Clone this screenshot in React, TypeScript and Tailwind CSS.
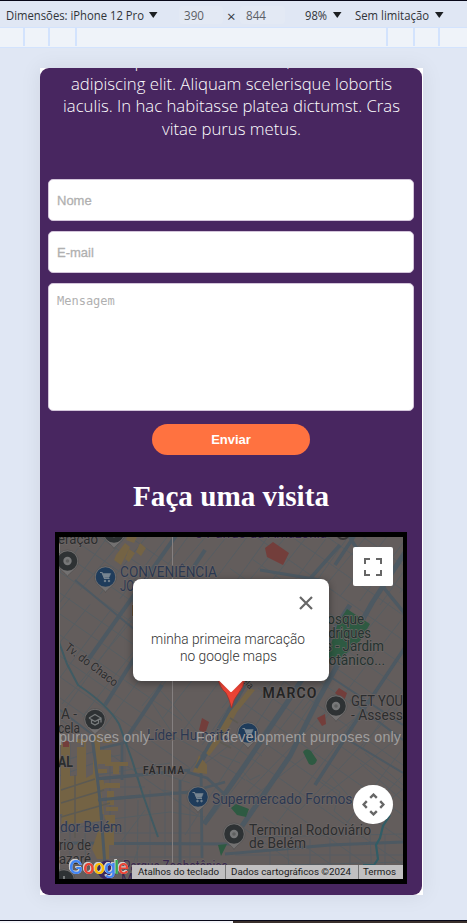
import React from "react";

const INTRO = [
  { text: "Lorem ipsum dolor sit amet, consectetur", width: 308 },
  { text: "adipiscing elit. Aliquam scelerisque lobortis", width: 321 },
  { text: "iaculis. In hac habitasse platea dictumst. Cras", width: 337 },
  { text: "vitae purus metus.", width: 139 },
];

/* One line of text fitted to a fixed advance width. */
function Fit({
  text,
  width,
  height,
  size,
  base,
  className = "",
  weight = 400,
}: {
  text: string;
  width: number;
  height: number;
  size: number;
  base: number;
  className?: string;
  weight?: number;
}) {
  return (
    <svg width={width} height={height} className={`block shrink-0 overflow-visible ${className}`}>
      <text x="0" y={base} fontSize={size} fontWeight={weight} textLength={width} lengthAdjust="spacingAndGlyphs" fill="currentColor">
        {text}
      </text>
    </svg>
  );
}

function Caret() {
  return (
    <svg width="9" height="6" viewBox="0 0 9 6" className="shrink-0">
      <path d="M0 0h8.500L4.250 6z" fill="#1c1f22" />
    </svg>
  );
}

function Toolbar() {
  return (
    <div className="flex h-[27px] items-center border-b border-[#d3e3fd] bg-[#e0e7f4] pt-px pl-[6px] font-['Open_Sans',sans-serif] text-[#303338]">
      <Fit text="Dimensões: iPhone 12 Pro" width={138} height={16} size={12} base={12.8} />
      <span className="w-[5px]" />
      <Caret />
      <div className="ml-[21px] flex h-[18px] w-[44px] items-center rounded-sm bg-[#e3e9f4] pl-[5px] text-[#5c6066]">
        <Fit text="390" width={20} height={16} size={12} base={12.8} />
      </div>
      <span className="ml-[4px] w-[10px] pt-[4px] text-[15px] leading-none text-[#34383e]">×</span>
      <div className="ml-[3px] flex h-[18px] w-[45px] items-center rounded-sm bg-[#e3e9f4] pl-[6px] text-[#5c6066]">
        <Fit text="844" width={20} height={16} size={12} base={12.8} />
      </div>
      <span className="w-[20px]" />
      <Fit text="98%" width={22} height={16} size={12} base={12.8} />
      <span className="w-[6px]" />
      <Caret />
      <span className="w-[13px]" />
      <Fit text="Sem limitação" width={74} height={16} size={12} base={12.8} />
      <span className="w-[6px]" />
      <Caret />
    </div>
  );
}

function MediaBar() {
  return (
    <div className="flex h-[20px] justify-between border-b border-[#d3e3fd] bg-[#eff3f9] pb-px">
      <div className="flex">
        <div className="w-[25px] border-r-2 border-[#d3e3fd]" />
        <div className="w-[25px] border-r-2 border-[#d3e3fd]" />
        <div className="w-[27px] border-r-2 border-[#d3e3fd]" />
      </div>
      <div className="flex">
        <div className="w-[27px] border-l-2 border-[#d3e3fd]" />
        <div className="w-[25px] border-l-2 border-[#d3e3fd]" />
        <div className="w-[29px] border-l-2 border-[#d3e3fd]" />
      </div>
    </div>
  );
}

function Label({
  x,
  y,
  w,
  size = 14,
  fill = "#2b2d2e",
  weight = 400,
  children,
}: {
  x: number;
  y: number;
  w: number;
  size?: number;
  fill?: string;
  weight?: number;
  children: string;
}) {
  return (
    <text x={x} y={y} fontSize={size} fontWeight={weight} fill={fill} stroke="#6b6565" strokeWidth="1.4" paintOrder="stroke" textLength={w} lengthAdjust="spacingAndGlyphs">
      {children}
    </text>
  );
}

function Pin({ x, y, kind }: { x: number; y: number; kind: "dot" | "cart" | "school" | "plus" }) {
  const color = kind === "cart" ? "#1f3c5b" : "#2e3234";
  return (
    <g transform={`translate(${x} ${y})`}>
      <path d="M0 15.500C-2 11-11 8-11 0a11 11 0 1 1 22 0C11 8 2 11 0 15.500z" fill="#737171" stroke="#4f4d4d" strokeWidth=".6" />
      <circle r="9.800" fill={color} />
      {kind === "dot" && <circle r="4.200" fill="#777879" />}
      {kind === "dot" && <circle r="1.800" fill="#5f6060" />}
      {kind === "cart" && (
        <g stroke="#778591" fill="none">
          <path d="M-5.500-4.500h2l2.500 6h5" strokeWidth="1.200" />
          <path d="M-2.800-3.500h8L3.500.5h-5z" fill="#778591" strokeWidth=".5" />
          <circle cx="-.5" cy="4" r=".8" fill="#778591" />
          <circle cx="3.500" cy="4" r=".8" fill="#778591" />
        </g>
      )}
      {kind === "school" && (
        <path d="M-6-1.500 0-5l6 3.500V3M6-1.500 0 2l-6-3.500M-3.500.5v3L0 5.500l3.500-2v-3" fill="none" stroke="#777b7c" strokeWidth="1.300" />
      )}
      {kind === "plus" && <path d="M0-4v8M-4 0h8" stroke="#777b7c" strokeWidth="2" />}
    </g>
  );
}

const range = (n: number) => Array.from({ length: n }, (_, i) => i);

function MapCanvas() {
  return (
    <svg width="344" height="342" viewBox="59 537 344 342" className="block font-[Roboto,sans-serif]">
      <rect x="59" y="537" width="344" height="342" fill="#635d5c" />

      <g stroke="#565d62" strokeWidth="1" fill="none">
        {range(24).map((i) => {
          const x = 20 + i * 20;
          const gap = (i * 37) % 50;
          return <path key={i} d={`M${x - 118} ${750 - gap}L${x - 30} ${622 - gap / 2}M${x - 20} ${606 - gap / 3}L${x + 40} 520`} />;
        })}
        {range(13).map((i) => {
          const y = 520 + i * 21;
          return <path key={i} d={`M50 ${y - 60}L${150 + ((i * 29) % 50)} ${y + 10 + ((i * 29) % 50) * 0.7}`} />;
        })}
        {range(16).map((i) => {
          const y = 440 + i * 25;
          return <path key={i} d={`M${225 + ((i * 17) % 40)} ${y + ((i * 17) % 40) * 0.7}L410 ${y + 130}`} />;
        })}
        {range(13).map((i) => {
          const x = 215 + i * 23;
          return <path key={i} d={`M${x - 30} ${835 - ((i * 13) % 40)}L${x + 70} ${680 + ((i * 13) % 40)}`} />;
        })}
        <path d="M59 762 96 751M59 776 97 762M59 789 98 775M59 803 99 789M59 816 100 800M59 833 103 821M70 740V870M83 735 86 879M110 750V835M125 745V879M138 800 137 879M150 790V878M165 780V879M190 790V879" />
        <path d="M95 760 120 755M98 775 170 763M100 787H145M104 820 170 812 205 817M105 833H200M110 857H200M150 770 190 783M162 790 205 797M140 843 128 879M145 810 120 843" />
        <path d="M150 700 175 737 209 756 245 780M160 690 200 735M203 765 239 738M182 780 205 750M220 755 240 763" />
        <path d="M235 855H403M255 837 403 834M250 866 403 862M270 846V879M287 843 290 879M310 839V879M330 838V879M350 837V879M370 835 372 879M385 835V875" />
        <path d="M322 780 340 792 334 811 351 825M330 775 363 812M360 763 403 801M365 753 403 785" />
        <path d="M254 750 262 756M240 768 250 780 260 775" />
      </g>

      <g stroke="#4d5962" fill="none" strokeLinejoin="round">
        <path d="M88 660 180 530M105 705 155 625 205 550M124 742 162 685" strokeWidth="4" />
        <path d="M196 770 247 680 285 625M204 824 245 765 290 698 350 605M242 826 290 756 318 700 372 603 410 545" strokeWidth="5" />
        <path d="M315 785 360 715 410 640M345 530 375 577 410 620M335 565 357 532M300 590 340 545" strokeWidth="3.500" />
        <path d="M92 735 100 800 106 879M93 750 128 742M96 779 190 770M98 800 190 792 225 782M59 843 235 844M180 780V879M201 765 202 858" strokeWidth="2.800" />
        <path d="M187 772 207 778 235 804M59 793 95 780M122 742V780M225 854 330 845 403 842M260 570 320 580" strokeWidth="2.800" />
        <path d="M350 700 403 740M340 735 403 773M290 650 403 725M75 580 135 630M60 710 93 735" strokeWidth="2" />
      </g>
      <path d="M59 642 67 664 78 685Q108 705 119 724L132 760 143 795 158 837" fill="none" stroke="#405b63" strokeWidth="2" />
      <path d="M390 815 383 826 380 838 376 845 378 859 374 865H363" fill="none" stroke="#315d66" strokeWidth="2.200" />

      <g fill="#746344">
        <path d="M127 537h10l-3 6-8-3zM140 543l6 5-5 8-5-4zM116 555l9-12 5 4-9 18-7-5zM129 549l6 4-6 9-4-3z" />
        <path d="M61 744h9v32h7v-29h7v-4h-7v-4h9v39l7-4v-39h7v15h11v14H98v5h9v4h-9v6h5l3 9-5 2 3 24H60v-26l1-4z" />
        <path d="M63 808h36l2 13-40 4zM98 831h16v14h-5v14H97l-5-10zM107 791h7v14h-7zM104 815h11v13h-7z" />
        <path d="M103 740h9v3h-9zM105 762h23v4h-9v8h-6v-8h-8zM105 783h15v5h-15zM106 807h12v4h-12zM101 843h9v2h-9z" />
        <path d="M193 772l6-17 8 10v9zM204 751l3-2 20-34 13-15 9-12 6 2-18 22-14 26-14 18z" />
      </g>
      <g stroke="#5c5a53" strokeWidth="1.500">
        <path d="M61 790 95 779M61 803 104 790M61 817 110 803M75 775V838M220 742l11 6M230 718l8 5" />
      </g>
      <path d="M92 735 100 800 106 879M196 768 238 695M96 779 140 775M98 800 140 796" stroke="#4d5962" strokeWidth="3" fill="none" />
      <g fill="#733e3b">
        <path d="M265 548l8-6 16 11-6 12-16-8zM202 718l7 4-4 12-6-4zM335 693l4-5 8 5-3 8zM317 718l8-4 1 10-4 2zM63 741h6v6h-6z" />
      </g>
      <g fill="#2e5a42">
        <path d="M338 623l9-14 23 15-10 17-18 16-17 5zM303 752q3-5 8-1l6 9q-2 7-8 4zM231 808l5-4 13 5-3 8-9-2zM218 845l9-1-6 12z" />
      </g>
      <path d="M172.500 537V879M59.500 537V879" stroke="#858080" strokeWidth="1" />

      <Pin x={114} y={533} kind="dot" />
      <Pin x={67.5} y={561} kind="dot" />
      <Pin x={105.5} y={577} kind="cart" />
      <Pin x={95} y={719.5} kind="school" />
      <Pin x={336} y={706} kind="dot" />
      <Pin x={248} y={733} kind="cart" />
      <Pin x={198} y={797} kind="cart" />
      <Pin x={234} y={834} kind="dot" />
      <Pin x={64} y={880} kind="plus" />
      <circle cx="107" cy="870" r="9.500" fill="#3b2860" />
      <circle cx="343" cy="533" r="6" fill="none" stroke="#393738" strokeWidth="2" />

      <Label x={58} y={544} w={40}>eração</Label>
      <Label x={120} y={577} w={97} fill="#2b3851">CONVENIÊNCIA</Label>
      <Label x={120} y={591} w={65} fill="#2b3851">JOSÉ MARIA</Label>
      <Label x={195} y={537.5} w={35} fill="#38284f">o Pan</Label>
      <Label x={231} y={537.5} w={96} fill="#38284f">do da Amazônia</Label>
      <Label x={131.5} y={616} w={22} weight={700} fill="#191919">PE</Label>
      <g transform="rotate(37 64 649)">
        <Label x={64} y={649} w={63} size={12}>Tv. do Chaco</Label>
      </g>
      <Label x={319} y={623.5} w={45} fill="#24332f">Bosque</Label>
      <Label x={313} y={637.5} w={58} fill="#24332f">Rodrigues</Label>
      <Label x={300} y={651} w={84} fill="#24332f">Alves - Jardim</Label>
      <Label x={320} y={665} w={65} fill="#24332f">Botânico...</Label>
      <g transform="rotate(45 242 682)">
        <Label x={241} y={682} w={12} size={10}>ela</Label>
      </g>
      <text x="262.500" y="697.500" fontSize="14" fontWeight="600" fill="#242424" stroke="#6b6565" strokeWidth="1.400" paintOrder="stroke" textLength="54">MARCO</text>
      <Label x={351} y={706} w={60}>GET YOUR</Label>
      <Label x={351} y={719.5} w={52}>- Assess</Label>
      <Label x={61} y={719} w={16}>A -</Label>
      <Label x={58} y={733} w={22}>cela</Label>
      <Label x={147} y={739.5} w={84} fill="#2b3851">Líder Humaitá</Label>
      <Label x={58} y={767} w={15} weight={700}>AL</Label>
      <text x="143" y="773.500" fontSize="10.200" fontWeight="600" fill="#282828" stroke="#6b6565" strokeWidth="1.300" paintOrder="stroke" textLength="41">FÁTIMA</text>
      <Label x={212} y={804} w={148} fill="#2b3851">Supermercado Formosa</Label>
      <Label x={249} y={834.5} w={122}>Terminal Rodoviário</Label>
      <Label x={249} y={848} w={57}>de Belém</Label>
      <Label x={60} y={832} w={62} fill="#2b3851">dor Belém</Label>
      <Label x={59} y={850} w={32}>rio de</Label>
      <Label x={59} y={863.5} w={32}>azaré</Label>
      <Label x={123} y={871} w={105} fill="#38284f">Parque Zoobotânico</Label>
      <Label x={121} y={884} w={45} fill="#38284f">Mangal</Label>

      <g fill="#a09d9d" fontFamily="'Liberation Sans', Arial, sans-serif" fontSize="14.300">
        <text x="59" y="742" textLength="91">purposes only</text>
        <text x="196" y="742" textLength="205">For development purposes only</text>
      </g>

      <path d="M218 678q1 9 8 15 3 5 5.500 15 2.500-10 6.500-14 6-7 7-16z" fill="#ea4335" stroke="#9c322a" strokeWidth=".8" />
    </svg>
  );
}

const LOGO = [
  { c: "G", x: 0, fill: "#4285f4" },
  { c: "o", x: 14.3, fill: "#ea4335" },
  { c: "o", x: 24.8, fill: "#fbbc05" },
  { c: "g", x: 35.2, fill: "#4285f4" },
  { c: "l", x: 45.3, fill: "#34a853" },
  { c: "e", x: 49, fill: "#ea4335" },
];

function GoogleLogo() {
  return (
    <svg
      width="62"
      height="24"
      viewBox="0 0 62 24"
      className="absolute bottom-[-3px] left-[9.500px] overflow-visible font-[Inter,sans-serif] text-[18.500px] font-semibold [filter:drop-shadow(0.7px_0.7px_0_#d0d0d0)_drop-shadow(-0.7px_-0.7px_0_#d0d0d0)]"
    >
      {LOGO.map((l) => (
        <text key={l.x} x={l.x} y="16" fill={l.fill}>
          {l.c}
        </text>
      ))}
    </svg>
  );
}

function GoogleMap() {
  return (
    <div className="relative mx-auto h-[352px] w-[352px] shrink-0 overflow-hidden border-[4px] border-t-[5px] border-b-[5px] border-black font-[Roboto,sans-serif]">
      <MapCanvas />

      <div className="absolute top-[42px] left-[74px] flex h-[102px] w-[196px] flex-col items-center rounded-[8px] bg-white pt-[53px] pr-[6px] text-[#333] shadow-[0_2px_7px_1px_rgba(0,0,0,0.3)]">
        <svg width="14" height="14" viewBox="0 0 14 14" className="absolute top-[17px] right-[16px]">
          <path d="M1 1l12 12M13 1L1 13" stroke="#666" strokeWidth="2.200" />
        </svg>
        <Fit text="minha primeira marcação" width={154} height={17} size={14} base={11.5} weight={300} />
        <Fit text="no google maps" width={97} height={17} size={14} base={11.5} weight={300} />
      </div>
      <div className="absolute top-[143px] left-[160px] h-[12px] w-[24px] bg-white [clip-path:polygon(0_0,100%_0,50%_100%)]" />

      <button className="absolute top-[10px] left-[294px] flex h-[39px] w-[40px] items-center justify-center rounded-[2px] bg-white">
        <svg width="18" height="18" viewBox="0 0 18 18" fill="none" stroke="#666" strokeWidth="2">
          <path d="M1 6V1h5M12 1h5v5M17 12v5h-5M6 17H1v-5" />
        </svg>
      </button>
      <button className="absolute top-[248px] left-[294px] flex h-[39px] w-[40px] items-center justify-center rounded-full bg-white">
        <svg width="23" height="23" viewBox="0 0 23 23" fill="none" stroke="#666" strokeWidth="2.400">
          <path d="M8.200 4.800l3.300-3.200 3.300 3.200M8.200 18.200l3.300 3.200 3.300-3.200M4.800 8.200L1.600 11.500l3.200 3.300M18.200 8.200l3.200 3.300-3.200 3.300" />
        </svg>
      </button>

      <GoogleLogo />
      <div className="absolute right-0 bottom-0 flex h-[14px] items-center text-[#1a1a1a]">
        <div className="flex h-full w-[93px] items-center justify-center bg-[#c1c0c1]">
          <Fit text="Atalhos do teclado" width={81} height={12} size={9.6} base={9} />
        </div>
        <div className="flex h-full w-[133px] items-center justify-center border-l border-[#777] bg-[#c1c0c1] pr-[2px]">
          <Fit text="Dados cartográficos ©2024" width={120} height={12} size={9.6} base={9} />
        </div>
        <div className="flex h-full w-[45px] items-center justify-center border-l border-[#777] bg-[#c1c0c1] pr-[3px]">
          <Fit text="Termos" width={33} height={12} size={9.6} base={9} />
        </div>
      </div>
    </div>
  );
}

export default function App() {
  return (
    <div className="flex h-[923px] w-[467px] flex-col overflow-hidden border-t border-[#080818] bg-[#e0e7f4]">
      <Toolbar />
      <MediaBar />
      <main className="flex min-h-0 flex-1 pt-[20px] pl-[40px]">
        <div className="h-[827px] w-[383px] bg-white pr-px shadow-[0_0_20px_rgba(0,0,0,0.08)]">
          <div className="flex h-full flex-col overflow-hidden rounded-[9px] bg-[#482660] px-[8px]">
            <div className="-mt-[19px] flex flex-col items-center font-['Open_Sans',sans-serif] text-white">
              {INTRO.map((line) => (
                <Fit key={line.text} text={line.text} width={line.width} height={22.6} size={17} base={17.5} weight={350} />
              ))}
            </div>
            <form className="mt-[40px] flex flex-col" onSubmit={(e) => e.preventDefault()}>
              <input
                placeholder="Nome"
                className="h-[42px] rounded-[5px] border border-[#d3c5da] bg-white px-[8px] font-['Liberation_Sans',Arial,sans-serif] text-[13px] placeholder:text-[#b0b0b0] placeholder:opacity-100 placeholder:[-webkit-text-stroke:0.3px_#b0b0b0]"
              />
              <input
                placeholder="E-mail"
                className="mt-[10px] h-[42px] rounded-[5px] border border-[#d3c5da] bg-white px-[8px] font-['Liberation_Sans',Arial,sans-serif] text-[13px] placeholder:text-[#b0b0b0] placeholder:opacity-100 placeholder:[-webkit-text-stroke:0.3px_#b0b0b0]"
              />
              <textarea
                placeholder="Mensagem"
                className="mt-[10px] h-[128px] resize-none rounded-[5px] border border-[#d3c5da] bg-white px-[8px] pt-[8px] font-['DejaVu_Sans_Mono',monospace] text-[12px] leading-[18px] placeholder:text-[#b0b0b0] placeholder:opacity-100"
              />
              <button className="mt-[13px] h-[31px] w-[158px] self-center rounded-full bg-[#ff7240] font-['Liberation_Sans',Arial,sans-serif] text-[13px] font-bold text-white">
                Enviar
              </button>
            </form>
            <h2 className="mt-[24px] mb-[18px] flex h-[35px] justify-center pr-px font-['Liberation_Serif','Times_New_Roman',serif] text-white">
              <Fit text="Faça uma visita" width={196} height={35} size={28.5} base={27} weight={700} />
            </h2>
            <GoogleMap />
          </div>
        </div>
      </main>
      <footer className="flex h-[3px] shrink-0 border-t border-[#080818]">
        <div className="w-[233px] bg-[#f3f4f8]" />
        <div className="flex-1 bg-[#3a302c]" />
      </footer>
    </div>
  );
}
